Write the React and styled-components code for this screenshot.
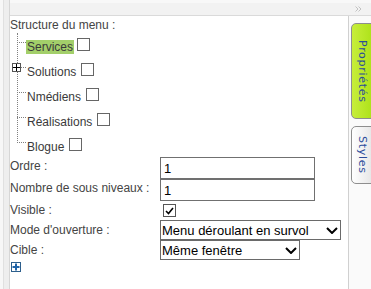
import React from 'react';
import styled, { createGlobalStyle } from 'styled-components';

const GlobalStyle = createGlobalStyle`
    html, body {
        margin: 0;
        padding: 0;
        background: #ffffff;
        font-family: "Liberation Sans", Arial, sans-serif;
    }
`;

const Frame = styled.div`
    display: flex;
    width: 371px;
    height: 289px;
    overflow: hidden;
    background: #ffffff;
`;

const Gutter = styled.div`
    width: 6px;
    flex-shrink: 0;
    background: #eeeeee;
    border-left: 3px solid #f7f7f7;
    border-right: 1px solid #d6d6d6;
    box-shadow: inset 1px 0 0 #e0e0e0;
`;

const Panel = styled.div`
    flex: 1;
    display: flex;
    flex-direction: column;
    min-width: 0;
`;

const TopBar = styled.div`
    height: 12px;
    flex-shrink: 0;
    display: flex;
    justify-content: flex-end;
    align-items: center;
    padding-right: 9px;
    background: #f2f2f2;
    border-top: 3px solid #f8f8f8;
    border-bottom: 1px solid #dadada;
`;

const Body = styled.div`
    flex: 1;
    display: flex;
    min-height: 0;
`;

const Main = styled.div`
    flex: 1;
    padding: 1px 0 0 0;
    color: #444;
    font-size: 12px;
`;

const Heading = styled.div`
    line-height: 16px;
`;

const Tree = styled.div`
    position: relative;
    margin-top: 2px;
    padding-left: 16px;

    &::before {
        content: '';
        position: absolute;
        left: 7px;
        top: -2px;
        height: 110px;
        border-left: 1px dotted #808080;
    }
`;

const TreeItem = styled.div`
    position: relative;
    height: ${p => (p.last ? 22 : 25)}px;
    line-height: 25px;
    color: #3a3a3a;
    white-space: nowrap;

    &::before {
        content: '';
        position: absolute;
        left: -9px;
        top: 7px;
        width: 9px;
        border-top: 1px dotted #808080;
    }
`;

const Label = styled.span`
    padding: 0 1px;
    background: ${p => (p.selected ? '#a3cf6a' : 'transparent')};
`;

const Box = styled.span`
    display: inline-block;
    width: 11px;
    height: 11px;
    margin-left: ${p => p.gap || 4}px;
    border: 1px solid #666;
    background: #fff;
    vertical-align: baseline;
    position: relative;
    top: -0px;
`;

const Expander = styled.span`
    position: absolute;
    left: -14px;
    top: 3px;
    width: 7px;
    height: 7px;
    border: 1px solid #555;
    background: #fff;
    display: flex;
    align-items: center;
    justify-content: center;
`;

const Form = styled.div`
    display: grid;
    grid-template-columns: 150px auto;
    align-items: start;
`;

const FieldLabel = styled.div`
    line-height: 16px;
    padding-top: ${p => p.pad || 1}px;
    color: #444;
    white-space: nowrap;
`;

const TextInput = styled.input`
    box-sizing: border-box;
    width: 155px;
    height: 22px;
    margin: 0;
    padding: 0 3px;
    border: 1px solid #707070;
    font-family: "Liberation Sans", Arial, sans-serif;
    font-size: 13px;
    color: #000;
    outline: none;
`;

const CheckCell = styled.div`
    height: 19px;
    padding: 3px 0 0 3px;
    box-sizing: border-box;
`;

const CheckBox = styled.span`
    display: flex;
    width: 11px;
    height: 11px;
    border: 1px solid #555;
    background: #fff;
    align-items: center;
    justify-content: center;
`;

const SelectWrap = styled.div`
    position: relative;
    width: ${p => p.width}px;
    height: 20px;
`;

const Select = styled.select`
    box-sizing: border-box;
    appearance: none;
    width: 100%;
    height: 20px;
    margin: 0;
    padding: 0 0 0 1px;
    border: 1px solid #6a6a6a;
    border-radius: 0;
    background: #fff;
    font-family: "Liberation Sans", Arial, sans-serif;
    font-size: 13px;
    color: #000;
    outline: none;
`;

const Chevron = styled.svg`
    position: absolute;
    right: 3px;
    top: 7px;
    pointer-events: none;
`;

const AddButton = styled.div`
    margin: 2px 0 0 1px;
    width: 8px;
    height: 8px;
    border: 1px solid #2d5f8c;
    background: #fff;
    display: flex;
    align-items: center;
    justify-content: center;
`;

const TabColumn = styled.div`
    width: 23px;
    flex-shrink: 0;
    background: #fafafa;
    border-left: 1px solid #d0d0d0;
    padding: 7px 0 0 2px;
    box-sizing: border-box;
    overflow: hidden;
    display: flex;
    flex-direction: column;
    gap: 7px;
`;

const Tab = styled.div`
    width: 22px;
    height: ${p => p.height}px;
    box-sizing: border-box;
    border: 1px solid #8e8e8e;
    border-radius: 5px 0 0 5px;
    background: ${p =>
        p.active
            ? 'linear-gradient(to right, #c7ee3a, #aee21a)'
            : 'linear-gradient(to right, #ffffff, #e6e6e6)'};
    writing-mode: vertical-rl;
    display: flex;
    align-items: center;
    justify-content: center;
    font-family: "DejaVu Sans", Verdana, sans-serif;
    font-size: 11px;
    letter-spacing: 0.7px;
    color: #2b4c9b;
`;

const treeItems = [
    { name: 'Services', selected: true },
    { name: 'Solutions', expandable: true },
    { name: 'Nmédiens' },
    { name: 'Réalisations' },
    { name: 'Blogue' },
];

const ChevronIcon = () => (
    <Chevron width="12" height="7" viewBox="0 0 12 7">
        <path d="M1 1 L6 6 L11 1" fill="none" stroke="#000" strokeWidth="2" />
    </Chevron>
);

const App = () => {
    return (
        <Frame>
            <GlobalStyle />
            <Gutter />
            <Panel>
                <TopBar>
                    <svg width="7" height="6" viewBox="0 0 7 6">
                        <path d="M0.5 0.5 L3 3 L0.5 5.5 M3.5 0.5 L6 3 L3.5 5.5" fill="none" stroke="#c2c2c2" strokeWidth="1" />
                    </svg>
                </TopBar>
                <Body>
                    <Main>
                        <Heading>Structure du menu :</Heading>
                        <Tree>
                            {treeItems.map((item, i) => (
                                <TreeItem key={item.name} last={i === treeItems.length - 1}>
                                    {item.expandable && (
                                        <Expander>
                                            <svg width="7" height="7" viewBox="0 0 7 7">
                                                <path d="M0 3.5 H7 M3.5 0 V7" stroke="#000" strokeWidth="1" />
                                            </svg>
                                        </Expander>
                                    )}
                                    <Label selected={item.selected}>{item.name}</Label>
                                    <Box gap={item.selected ? 3 : 4} />
                                </TreeItem>
                            ))}
                        </Tree>
                        <Form>
                            <FieldLabel>Ordre :</FieldLabel>
                            <TextInput defaultValue="1" />
                            <FieldLabel>Nombre de sous niveaux :</FieldLabel>
                            <TextInput defaultValue="1" />
                            <FieldLabel>Visible :</FieldLabel>
                            <CheckCell>
                                <CheckBox>
                                    <svg width="9" height="8" viewBox="0 0 9 8">
                                        <path d="M1 4 L3.5 6.5 L8 1" fill="none" stroke="#000" strokeWidth="1.6" />
                                    </svg>
                                </CheckBox>
                            </CheckCell>
                            <FieldLabel pad={2}>Mode d'ouverture :</FieldLabel>
                            <SelectWrap width={181}>
                                <Select defaultValue="survol">
                                    <option value="survol">Menu déroulant en survol</option>
                                    <option value="clic">Menu déroulant au clic</option>
                                </Select>
                                <ChevronIcon />
                            </SelectWrap>
                            <FieldLabel pad={2}>Cible :</FieldLabel>
                            <SelectWrap width={140}>
                                <Select defaultValue="meme">
                                    <option value="meme">Même fenêtre</option>
                                    <option value="nouvelle">Nouvelle fenêtre</option>
                                </Select>
                                <ChevronIcon />
                            </SelectWrap>
                        </Form>
                        <AddButton>
                            <svg width="8" height="8" viewBox="0 0 8 8">
                                <path d="M0.5 4 H7.5 M4 0.5 V7.5" stroke="#1f64a8" strokeWidth="2" />
                            </svg>
                        </AddButton>
                    </Main>
                    <TabColumn>
                        <Tab active height={96}>Propriétés</Tab>
                        <Tab height={58}>Styles</Tab>
                    </TabColumn>
                </Body>
            </Panel>
        </Frame>
    );
};

export default App;
